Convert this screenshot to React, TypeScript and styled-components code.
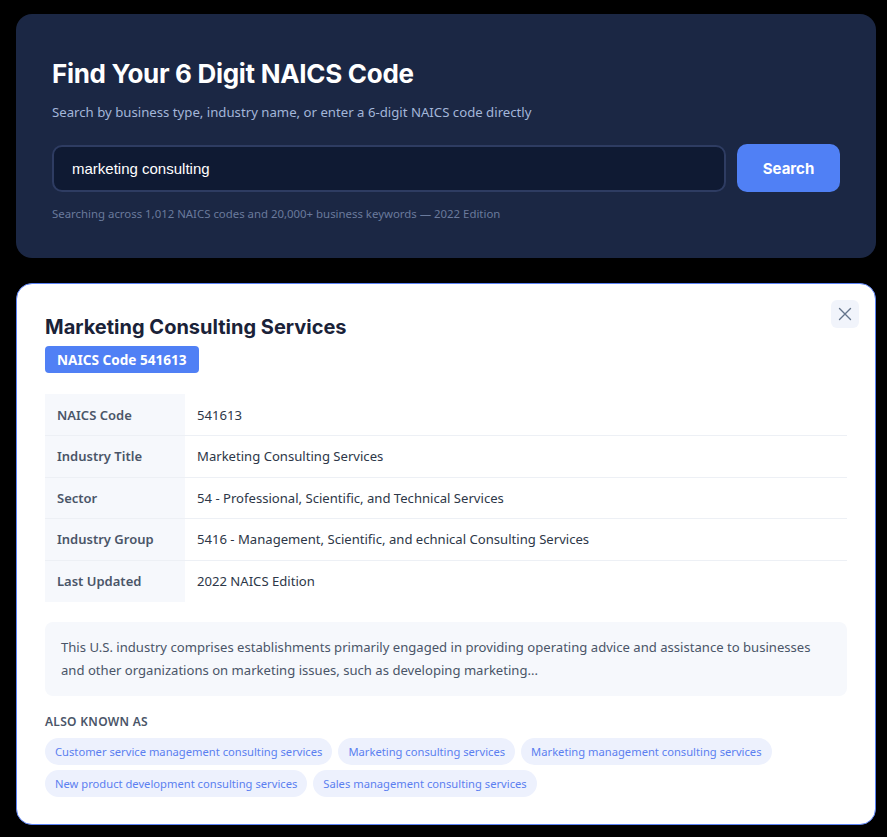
import styled, { createGlobalStyle } from 'styled-components';

const details = [
  { label: 'NAICS Code', value: '541613' },
  { label: 'Industry Title', value: 'Marketing Consulting Services' },
  { label: 'Sector', value: '54 - Professional, Scientific, and Technical Services' },
  { label: 'Industry Group', value: '5416 - Management, Scientific, and echnical Consulting Services' },
  { label: 'Last Updated', value: '2022 NAICS Edition' },
];

const aliases = [
  'Customer service management consulting services',
  'Marketing consulting services',
  'Marketing management consulting services',
  'New product development consulting services',
  'Sales management consulting services',
];

export default function App() {
  return (
    <>
      <GlobalStyle />
      <Page>
        <Hero>
          <HeroTitle>Find Your 6 Digit NAICS Code</HeroTitle>
          <HeroSub>Search by business type, industry name, or enter a 6-digit NAICS code directly</HeroSub>
          <SearchRow>
            <SearchInput defaultValue="marketing consulting" />
            <SearchButton>Search</SearchButton>
          </SearchRow>
          <HeroNote>Searching across 1,012 NAICS codes and 20,000+ business keywords — 2022 Edition</HeroNote>
        </Hero>

        <ResultCard>
          <CloseButton aria-label="Close">
            <svg width="14" height="14" viewBox="0 0 14 14" fill="none">
              <path d="M1.5 1.5L12.5 12.5M12.5 1.5L1.5 12.5" stroke="#64748b" strokeWidth="1.4" strokeLinecap="round" />
            </svg>
          </CloseButton>
          <ResultTitle>Marketing Consulting Services</ResultTitle>
          <CodeBadge>NAICS Code 541613</CodeBadge>

          <DetailTable>
            <tbody>
              {details.map((d) => (
                <tr key={d.label}>
                  <LabelCell>{d.label}</LabelCell>
                  <ValueCell>{d.value}</ValueCell>
                </tr>
              ))}
            </tbody>
          </DetailTable>

          <Description>
            This U.S. industry comprises establishments primarily engaged in providing operating advice and assistance to businesses
            and other organizations on marketing issues, such as developing marketing...
          </Description>

          <SectionLabel>Also Known As</SectionLabel>
          <ChipList>
            {aliases.map((a) => (
              <Chip key={a}>{a}</Chip>
            ))}
          </ChipList>
        </ResultCard>
      </Page>
    </>
  );
}

const GlobalStyle = createGlobalStyle`
  * { box-sizing: border-box; }
  body {
    margin: 0;
    background: #000;
    font-family: "Noto Sans", "Open Sans", sans-serif;
  }
`;

const Page = styled.div`
  width: 887px;
  padding: 14px 11px 12px 16px;
  display: flex;
  flex-direction: column;
  gap: 25px;
`;

const Hero = styled.section`
  background: #1b2744;
  border-radius: 16px;
  padding: 44px 36px 36px;
`;

const HeroTitle = styled.h1`
  margin: 0;
  font-family: Inter, sans-serif;
  font-weight: 700;
  font-size: 26px;
  line-height: 32px;
  color: #ffffff;
  letter-spacing: -0.3px;
`;

const HeroSub = styled.p`
  margin: 12px 0 0;
  font-size: 13.2px;
  line-height: 20px;
  color: #a3b6d9;
`;

const SearchRow = styled.div`
  margin-top: 22px;
  display: flex;
  gap: 11px;
  align-items: center;
`;

const SearchInput = styled.input`
  flex: 1;
  height: 47px;
  padding: 0 18px;
  border: 2px solid #2e3c62;
  border-radius: 10px;
  background: #0f1a33;
  color: #ffffff;
  font-family: "Liberation Sans", Arial, sans-serif;
  font-size: 15px;
  outline: none;
`;

const SearchButton = styled.button`
  width: 103px;
  height: 48px;
  border: none;
  border-radius: 10px;
  background: #5080f5;
  color: #ffffff;
  font-family: Inter, sans-serif;
  font-weight: 700;
  font-size: 15px;
  cursor: pointer;
`;

const HeroNote = styled.p`
  margin: 14px 0 0;
  font-size: 11.4px;
  line-height: 16px;
  color: #6a7a9c;
`;

const ResultCard = styled.section`
  position: relative;
  background: #ffffff;
  border: 1px solid #5b82f5;
  border-radius: 16px;
  padding: 30px 28px 27px;
`;

const CloseButton = styled.button`
  position: absolute;
  top: 16px;
  right: 16px;
  width: 28px;
  height: 28px;
  border: none;
  border-radius: 6px;
  background: #f1f4fb;
  display: flex;
  align-items: center;
  justify-content: center;
  padding: 0;
  cursor: pointer;
`;

const ResultTitle = styled.h2`
  margin: 0;
  font-family: Inter, sans-serif;
  font-weight: 700;
  font-size: 20px;
  line-height: 26px;
  color: #1a2238;
`;

const CodeBadge = styled.span`
  display: inline-block;
  margin-top: 6px;
  padding: 0 12px;
  height: 27px;
  line-height: 27px;
  border-radius: 4px;
  background: #5080f5;
  color: #ffffff;
  font-weight: 700;
  font-size: 13.6px;
`;

const DetailTable = styled.table`
  margin-top: 21px;
  width: 100%;
  border-collapse: collapse;
  font-size: 13.1px;

  tr + tr td {
    border-top: 1px solid #edf0f5;
  }
`;

const LabelCell = styled.td`
  width: 140px;
  height: 41.5px;
  padding: 0 12px;
  background: #f6f8fc;
  color: #4a5568;
  font-weight: 600;
  font-size: 13px;
`;

const ValueCell = styled.td`
  height: 41.5px;
  padding: 0 12px;
  color: #2d3748;
`;

const Description = styled.p`
  margin: 20px 0 0;
  padding: 14px 16px 14px;
  background: #f6f8fc;
  border-radius: 8px;
  font-size: 13.1px;
  line-height: 23px;
  color: #4a5568;
`;

const SectionLabel = styled.h3`
  margin: 18px 0 0;
  font-size: 12px;
  line-height: 16px;
  font-weight: 600;
  text-transform: uppercase;
  letter-spacing: 0.3px;
  color: #4a5568;
`;

const ChipList = styled.div`
  margin-top: 8px;
  display: flex;
  flex-wrap: wrap;
  gap: 5px 6px;
`;

const Chip = styled.span`
  height: 27px;
  line-height: 27px;
  padding: 0 10px;
  border-radius: 14px;
  background: #edf1fd;
  color: #5b7ff0;
  font-size: 11.2px;
`;
